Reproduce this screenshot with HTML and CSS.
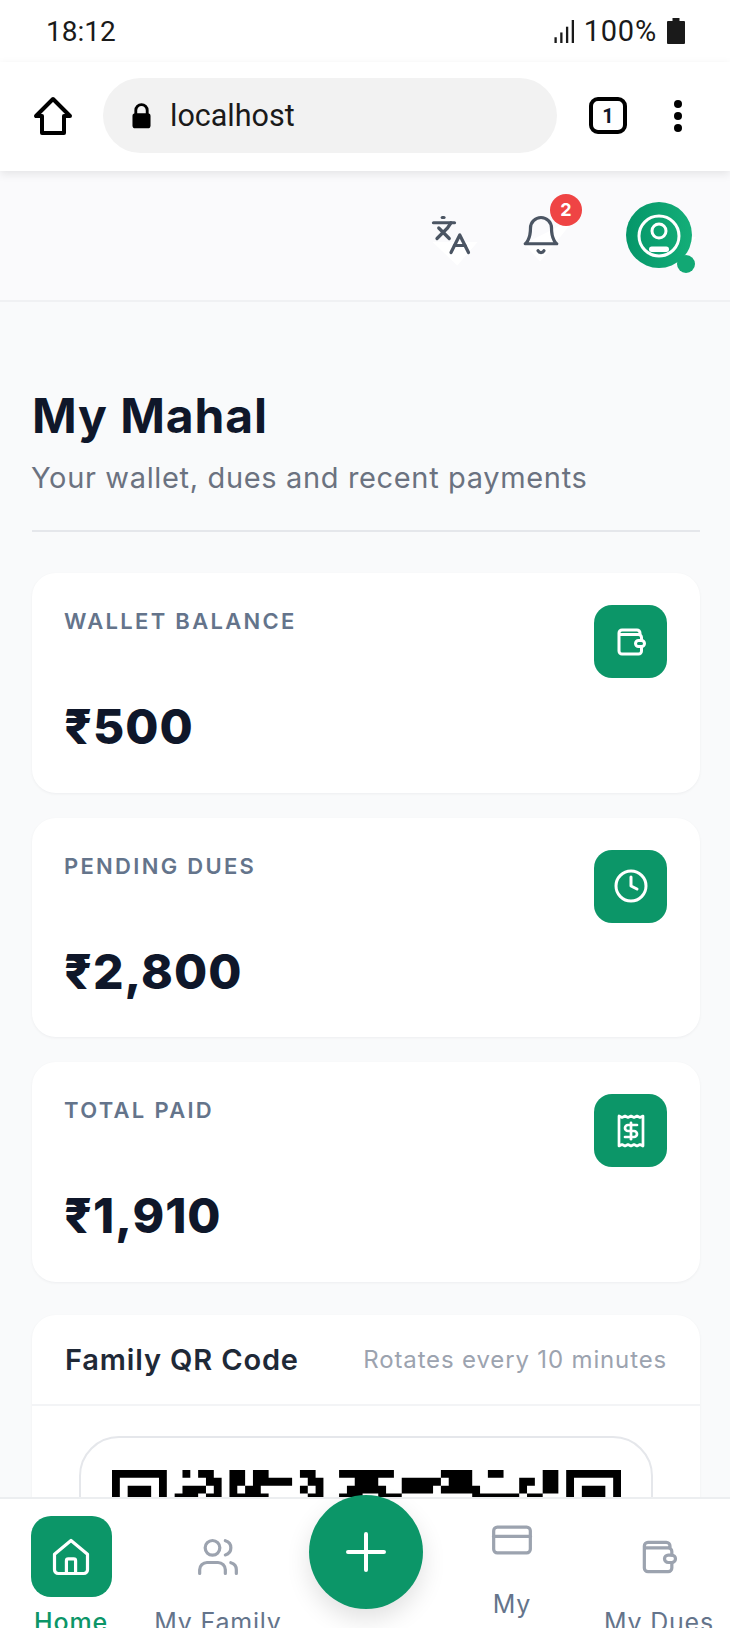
FILE: index.html
```html
<!DOCTYPE html>
<html>
  <head>
    <meta charset="utf-8">
    <title>My Mahal</title>
    <link rel="stylesheet" href="styles.css">
  </head>
  <body>
    <div class="statusbar">
      <span>18:12</span>
      <div class="status-right">
        <svg class="signal" viewBox="0 0 22 24" fill="#1a1a1a"><rect x="0" y="18" width="2.4" height="6"/><rect x="6" y="13" width="2.4" height="11"/><rect x="12" y="7" width="2.4" height="17"/><rect x="18" y="0" width="2.4" height="24"/></svg>
        <span class="pct">100%</span>
        <svg class="battery" viewBox="0 0 18 26" fill="#1a1a1a"><path d="M5.5 0h7v3H17a1 1 0 0 1 1 1v21a1 1 0 0 1-1 1H1a1 1 0 0 1-1-1V4a1 1 0 0 1 1-1h4.500z"/></svg>
      </div>
    </div>

    <div class="toolbar">
      <svg class="home-btn" viewBox="0 0 40 40" fill="none" stroke="#000" stroke-width="4" stroke-linejoin="round"><path d="M20 3 3 20h6v17h22V20h6z"/></svg>
      <div class="urlbar">
        <svg class="lock" viewBox="0 0 20 26"><path d="M4 11V7a6 6 0 0 1 12 0v4" fill="none" stroke="#000" stroke-width="3"/><rect x="0.500" y="10" width="19" height="16" rx="3"/></svg>
        <span>localhost</span>
      </div>
      <div class="tabcount">1</div>
      <div class="dots"><i></i><i></i><i></i></div>
    </div>

    <header class="app-head">
      <div class="head-btn">
        <svg class="icon" viewBox="0 0 24 24"><path d="m5 8 6 6"/><path d="m4 14 6-6 2-3"/><path d="M2 5h12"/><path d="M7 2h1"/><path d="m22 22-5-10-5 10"/><path d="M14 18h6"/></svg>
      </div>
      <div class="head-btn bell">
        <svg class="icon" viewBox="0 0 24 24"><path d="M6 8a6 6 0 0 1 12 0c0 7 3 9 3 9H3s3-2 3-9"/><path d="M10.300 21a1.940 1.940 0 0 0 3.400 0"/></svg>
        <span class="badge">2</span>
      </div>
      <div class="avatar">
        <svg viewBox="0 0 66 66"><defs><linearGradient id="av" x1="0" y1="0" x2="1" y2="0"><stop offset="0" stop-color="#059669"/><stop offset="1" stop-color="#14ae78"/></linearGradient></defs><circle cx="33" cy="33" r="33" fill="url(#av)"/><circle cx="33" cy="34" r="20" fill="none" stroke="#fff" stroke-width="3"/><circle cx="33" cy="29" r="7" fill="none" stroke="#fff" stroke-width="3"/><rect x="23" y="44.500" width="20" height="5.500" rx="2.750" fill="#fff"/></svg>
        <span class="online"></span>
      </div>
    </header>

    <main class="page">
      <h1>My Mahal</h1>
      <p class="sub">Your wallet, dues and recent payments</p>
      <hr class="rule">

      <section class="card stat">
        <div class="stat-top">
          <span class="stat-label">WALLET BALANCE</span>
          <div class="tile"><svg class="tile-icon" viewBox="0 0 24 24"><path d="M4 7h13a2 2 0 0 1 2 2v2M19 15v3a2 2 0 0 1-2 2H6a2 2 0 0 1-2-2V6a2 2 0 0 1 2-2h10a2 2 0 0 1 2 2v1"/><rect x="15" y="11" width="6" height="4" rx="2"/></svg></div>
        </div>
        <div class="amount">₹500</div>
      </section>

      <section class="card stat">
        <div class="stat-top">
          <span class="stat-label">PENDING DUES</span>
          <div class="tile"><svg class="tile-icon" viewBox="0 0 24 24"><circle cx="12" cy="12" r="10"/><path d="M12 6v6l4 2"/></svg></div>
        </div>
        <div class="amount">₹2,800</div>
      </section>

      <section class="card stat">
        <div class="stat-top">
          <span class="stat-label">TOTAL PAID</span>
          <div class="tile"><svg class="tile-icon receipt" viewBox="0 0 24 24"><path d="M4 2v20l2-1 2 1 2-1 2 1 2-1 2 1 2-1 2 1V2l-2 1-2-1-2 1-2-1-2 1-2-1-2 1Z"/><path d="M16 8h-6a2 2 0 1 0 0 4h4a2 2 0 1 1 0 4H8"/><path d="M12 17.500v-11"/></svg></div>
        </div>
        <div class="amount">₹1,910</div>
      </section>

      <section class="card qr-card">
        <div class="qr-head">
          <span class="qr-title">Family QR Code</span>
          <span class="qr-note">Rotates every 10 minutes</span>
        </div>
        <div class="qr-body">
          <div class="qr-frame">
            <svg class="qr" viewBox="0 0 65 65" fill="#000"><path d="M0 0h7v1H0zM9 0h1v1H9zM11 0h2v1h-2zM15 0h2v1h-2zM18 0h2v1h-2zM24 0h2v1h-2zM29 0h7v1h-7zM42 0h4v1h-4zM48 0h2v1h-2zM55 0h2v1h-2zM58 0h7v1h-7zM0 1h1v1H0zM6 1h1v1H6zM12 1h2v1h-2zM15 1h2v1h-2zM18 1h5v1h-5zM25 1h2v1h-2zM31 1h3v1h-3zM37 1h5v1h-5zM43 1h3v1h-3zM52 1h2v1h-2zM55 1h2v1h-2zM58 1h1v1h-1zM64 1h1v1h-1zM0 2h1v1H0zM2 2h3v1H2zM6 2h1v1H6zM9 2h3v1H9zM13 2h1v1h-1zM15 2h1v1h-1zM17 2h2v1h-2zM24 2h1v1h-1zM26 2h1v1h-1zM30 2h5v1h-5zM37 2h4v1h-4zM42 2h5v1h-5zM52 2h1v1h-1zM55 2h2v1h-2zM58 2h1v1h-1zM60 2h3v1h-3zM64 2h1v1h-1zM0 3h1v1H0zM2 3h3v1H2zM6 3h1v1H6zM8 3h3v1H8zM12 3h2v1h-2zM15 3h5v1h-5zM25 3h2v1h-2zM29 3h3v1h-3zM34 3h3v1h-3zM46 3h6v1h-6zM53 3h2v1h-2zM58 3h1v1h-1zM60 3h3v1h-3zM64 3h1v1h-1z"/></svg>
          </div>
        </div>
      </section>
    </main>

    <nav class="bottom-nav">
      <a class="nav-item active">
        <div class="nav-icon"><svg class="icon" viewBox="0 0 24 24"><path d="M3 10.500 12 3l9 7.500V19a2 2 0 0 1-2 2H5a2 2 0 0 1-2-2z"/><path d="M9.500 21v-7a1 1 0 0 1 1-1h3a1 1 0 0 1 1 1v7"/></svg></div>
        <span>Home</span>
      </a>
      <a class="nav-item">
        <div class="nav-icon"><svg class="icon" viewBox="0 0 24 24"><path d="M16 21v-2a4 4 0 0 0-4-4H6a4 4 0 0 0-4 4v2"/><circle cx="9" cy="7" r="4"/><path d="M22 21v-2a4 4 0 0 0-3-3.870"/><path d="M16 3.130a4 4 0 0 1 0 7.750"/></svg></div>
        <span>My Family</span>
      </a>
      <div></div>
      <a class="nav-item two-line">
        <div class="nav-icon"><svg class="icon" viewBox="0 0 24 24"><rect x="2" y="5" width="20" height="14" rx="2"/><path d="M2 10h20"/></svg></div>
        <span>My Payments</span>
      </a>
      <a class="nav-item">
        <div class="nav-icon"><svg class="icon" viewBox="0 0 24 24"><path d="M4 7h13a2 2 0 0 1 2 2v2M19 15v3a2 2 0 0 1-2 2H6a2 2 0 0 1-2-2V6a2 2 0 0 1 2-2h10a2 2 0 0 1 2 2v1"/><rect x="15" y="11" width="6" height="4" rx="2"/></svg></div>
        <span>My Dues</span>
      </a>
    </nav>

    <button class="fab"><svg viewBox="0 0 40 40" fill="none" stroke="#fff" stroke-width="4" stroke-linecap="round"><path d="M20 2v36M2 20h36"/></svg></button>
  </body>
</html>
```

FILE: styles.css
```css
html, body {
  margin: 0;
  height: 1628px;
  overflow: hidden;
}
body {
  position: relative;
  background: #f9fafb;
  font-family: Inter, "Liberation Sans", sans-serif;
  color: #0f172a;
}

/* phone chrome */
.statusbar {
  height: 62px;
  background: #fff;
  display: flex;
  align-items: center;
  justify-content: space-between;
  padding: 0 46px;
  font-family: Roboto, sans-serif;
  font-size: 28px;
  color: #1a1a1a;
}
.status-right {
  display: flex;
  align-items: center;
  margin-right: -1px;
}
.signal {
  width: 22px;
  height: 23px;
  margin-right: 8px;
}
.pct {
  font-size: 29px;
  letter-spacing: .8px;
}
.battery {
  width: 18px;
  height: 26px;
  margin-left: 10px;
}
.toolbar {
  height: 109px;
  box-sizing: border-box;
  background: #fff;
  display: flex;
  align-items: center;
  padding: 0 0 2px 33px;
  position: relative;
  z-index: 2;
  box-shadow: 0 3px 9px rgba(0, 0, 0, .09);
}
.home-btn {
  width: 40px;
  height: 40px;
}
.urlbar {
  width: 454px;
  height: 75px;
  margin-left: 30px;
  border-radius: 38px;
  background: #f2f2f2;
  display: flex;
  align-items: center;
  font-family: Roboto, sans-serif;
  font-size: 30.500px;
  color: #1a1a1a;
}
.lock {
  width: 19px;
  height: 26px;
  margin: 0 19px 0 29px;
}
.tabcount {
  width: 30px;
  height: 29px;
  margin-left: 32px;
  border: 4px solid #000;
  border-radius: 9px;
  display: flex;
  align-items: center;
  justify-content: center;
  font-family: Roboto, sans-serif;
  font-size: 20px;
  font-weight: 700;
}
.dots {
  margin-left: 47px;
  display: flex;
  flex-direction: column;
  gap: 4px;
}
.dots i {
  width: 8px;
  height: 8px;
  border-radius: 50%;
  background: #000;
}

/* app header */
.app-head {
  height: 131px;
  box-sizing: border-box;
  background: #fafafc;
  border-bottom: 2px solid #f0f1f3;
  display: flex;
  align-items: center;
  justify-content: flex-end;
  padding: 0 38px 2px 0;
}
.head-btn {
  width: 46px;
  height: 46px;
  position: relative;
  margin-right: 44px;
  display: flex;
  align-items: center;
  justify-content: center;
}
.head-btn.bell {
  margin-right: 62px;
}
.icon {
  width: 44px;
  height: 44px;
  display: block;
  position: relative;
  fill: none;
  stroke: #4b5563;
  stroke-width: 1.750;
  stroke-linecap: round;
  stroke-linejoin: round;
}
.head-btn .icon {
  width: 42px;
  height: 42px;
  stroke-width: 1.850;
  z-index: 1;
}
.head-btn::after {
  content: "";
  position: absolute;
  left: 4px;
  top: 30px;
  width: 46px;
  height: 24px;
  background: #fff;
  clip-path: polygon(0 0, 100% 0, 55% 100%);
}
.head-btn.bell::after {
  left: 6px;
  top: 6px;
  width: 52px;
  height: 44px;
  clip-path: polygon(0 60%, 100% 0, 31% 100%);
}
.badge {
  position: absolute;
  left: 32px;
  top: -18px;
  width: 32px;
  height: 32px;
  border-radius: 50%;
  background: #ef4444;
  color: #fff;
  font-size: 18px;
  font-weight: 700;
  line-height: 32px;
  text-align: center;
  z-index: 2;
}
.avatar {
  width: 66px;
  height: 66px;
  position: relative;
}
.avatar svg {
  display: block;
  position: relative;
  width: 66px;
  height: 66px;
  z-index: 1;
}
.avatar::after {
  content: "";
  position: absolute;
  left: 6px;
  top: 28px;
  width: 64px;
  height: 39px;
  background: #fff;
  clip-path: polygon(0 0, 100% 20%, 58% 100%);
}
.online {
  position: absolute;
  left: 51px;
  top: 53px;
  width: 18px;
  height: 18px;
  border-radius: 50%;
  background: #12a874;
  z-index: 2;
}

/* page */
.page {
  padding: 0 30px 0 32px;
}
h1 {
  margin: 84px 0 0;
  font-size: 48px;
  line-height: 60px;
  font-weight: 700;
  letter-spacing: .9px;
}
.sub {
  margin: 14px 0 0 -1px;
  font-size: 29px;
  line-height: 36px;
  color: #6b7280;
  letter-spacing: .65px;
}
.rule {
  margin: 34px 0 41px;
  border: 0;
  border-top: 2px solid #e5e7eb;
}
.card {
  background: #fff;
  border-radius: 24px;
  box-shadow: 0 1px 3px rgba(15, 23, 42, .05);
}
.stat {
  height: 219.500px;
  box-sizing: border-box;
  padding: 32px 33px 0 32px;
  margin-bottom: 25px;
}
.stat-top {
  display: flex;
  justify-content: space-between;
  align-items: flex-start;
}
.stat-label {
  font-size: 22px;
  line-height: 33px;
  font-weight: 600;
  color: #64748b;
  letter-spacing: 2.300px;
}
.tile {
  width: 73px;
  height: 73px;
  border-radius: 18px;
  background: #0c9668;
  display: flex;
  align-items: center;
  justify-content: center;
}
.tile-icon {
  width: 36px;
  height: 36px;
  fill: none;
  stroke: #fff;
  stroke-width: 2;
  stroke-linecap: round;
  stroke-linejoin: round;
}
.tile-icon.receipt {
  width: 36px;
  height: 36px;
  stroke-width: 1.800;
}
.amount {
  margin-top: 18px;
  font-size: 48px;
  line-height: 62px;
  font-weight: 800;
  letter-spacing: 1px;
}
.qr-card {
  margin-top: 33px;
}
.qr-head {
  height: 91px;
  box-sizing: border-box;
  padding: 0 33px;
  border-bottom: 2px solid #f3f4f6;
  display: flex;
  align-items: center;
  justify-content: space-between;
}
.qr-title {
  font-size: 29px;
  font-weight: 600;
  color: #1f2937;
  letter-spacing: .85px;
}
.qr-note {
  font-size: 24px;
  color: #9ca3af;
  letter-spacing: .85px;
}
.qr-body {
  padding: 30px 47px;
}
.qr-frame {
  height: 620px;
  box-sizing: border-box;
  border: 2px solid #e5e7eb;
  border-radius: 40px;
  padding: 32px 31px;
}
.qr {
  display: block;
  width: 509px;
  height: 509px;
}

/* bottom nav */
.bottom-nav {
  position: absolute;
  left: 0;
  right: 0;
  top: 1497px;
  height: 200px;
  box-sizing: border-box;
  padding: 17px 0 0;
  background: #fff;
  border-top: 2px solid #eceef0;
  display: grid;
  grid-template-columns: repeat(5, 147px);
  justify-content: center;
  align-items: start;
  z-index: 3;
}
.nav-item {
  display: flex;
  flex-direction: column;
  align-items: center;
  text-align: center;
  font-size: 25px;
  line-height: 32px;
  color: #64748b;
  letter-spacing: .8px;
}
.nav-icon {
  width: 81px;
  height: 81px;
  margin-bottom: 9px;
  border-radius: 20px;
  display: flex;
  align-items: center;
  justify-content: center;
}
.nav-icon .icon {
  stroke: #9ca3af;
}
.nav-item.two-line {
  margin-top: -17px;
  padding: 0 10px;
  line-height: 36px;
}
.two-line .nav-icon {
  margin-bottom: 6px;
}
.nav-item.active {
  color: #0c9668;
  font-weight: 500;
}
.active .nav-icon {
  background: #0c9668;
}
.active .nav-icon .icon {
  stroke: #fff;
}
.fab {
  position: absolute;
  left: 309px;
  top: 1495px;
  width: 114px;
  height: 114px;
  padding: 0;
  border: 0;
  border-radius: 50%;
  background: #0c9668;
  box-shadow: 0 10px 24px rgba(0, 0, 0, .12);
  display: flex;
  align-items: center;
  justify-content: center;
  z-index: 4;
}
.fab svg {
  width: 40px;
  height: 40px;
}
```
